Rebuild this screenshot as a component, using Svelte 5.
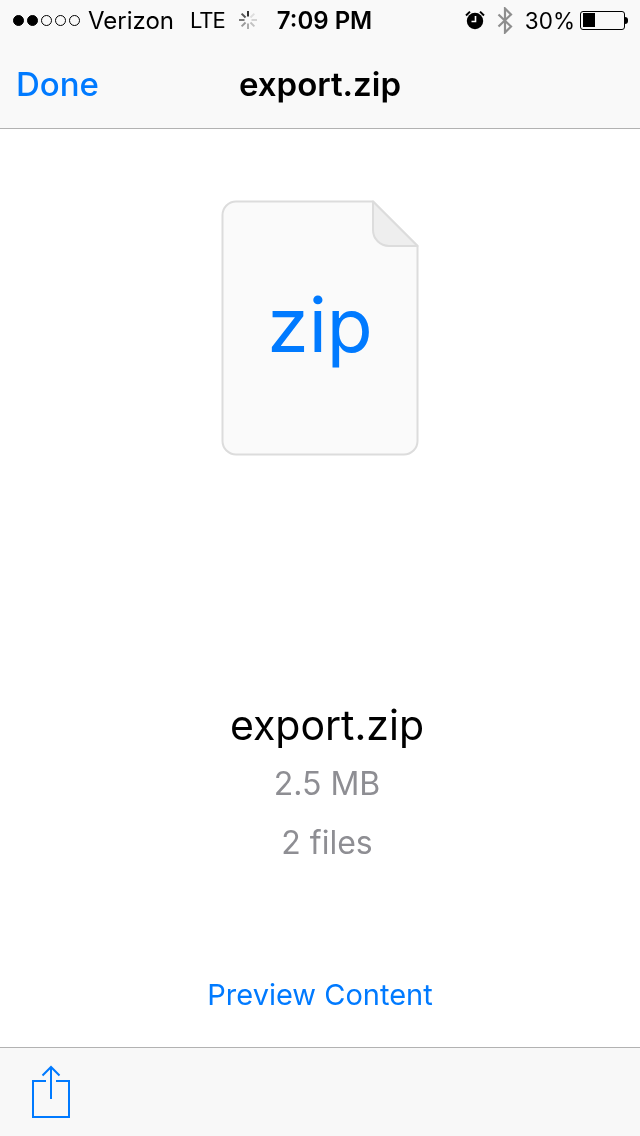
<script>
  const signal = [true, true, false, false, false];
  const spokes = [0, 45, 90, 135, 180, 225, 270, 315];
  const spokeOpacity = [0.8, 0.1, 0.15, 0.22, 0.3, 0.38, 0.5, 0.65];
</script>

<div class="screen">
  <header class="top">
    <div class="status">
      <div class="left">
        <div class="dots">
          {#each signal as on}
            <span class="dot" class:on></span>
          {/each}
        </div>
        <span class="carrier">Verizon</span>
        <span class="lte">LTE</span>
        <svg class="spinner" width="20" height="20" viewBox="0 0 20 20">
          {#each spokes as a, i}
            <line x1="10" y1="1" x2="10" y2="6.5" stroke="#000" stroke-width="2" opacity={spokeOpacity[i]} transform="rotate({a} 10 10)" />
          {/each}
        </svg>
      </div>
      <div class="time">7:09 PM</div>
      <div class="right">
        <svg class="alarm" width="20" height="20" viewBox="0 0 20 20">
          <circle cx="10" cy="11" r="8.2" fill="#000" />
          <path d="M1 5.5 L5 1.6 M15 1.6 L19 5.5" stroke="#000" stroke-width="2" fill="none" />
          <path d="M10.5 6 V11.5 H6.5" stroke="#fff" stroke-width="1.6" fill="none" />
        </svg>
        <svg class="bt" width="16" height="27" viewBox="0 0 16 27">
          <path d="M1.5 7.5 L14 19.5 L8 25.5 V1.5 L14 7.5 L1.5 19.5" stroke="#8e8e8e" stroke-width="2.2" fill="none" />
        </svg>
        <span class="pct">30%</span>
        <div class="battery">
          <div class="shell"><div class="level"></div></div>
          <div class="nub"></div>
        </div>
      </div>
    </div>
    <nav class="nav">
      <span class="done">Done</span>
      <span class="title">export.zip</span>
    </nav>
  </header>

  <main class="body">
    <div class="file">
      <svg width="198" height="256" viewBox="0 0 198 256">
        <path d="M152 1.5 H15 A13.5 13.5 0 0 0 1.5 15 V241 A13.5 13.5 0 0 0 15 254.5 H183 A13.5 13.5 0 0 0 196.5 241 V46 Z" fill="#fafafa" stroke="#dcdcdc" stroke-width="2" />
        <path d="M152 1.5 V30 A16 16 0 0 0 168 46 H196.5 Z" fill="#eeeeee" stroke="#dcdcdc" stroke-width="2" stroke-linejoin="round" />
      </svg>
      <span class="ext">zip</span>
    </div>
    <div class="name">export.zip</div>
    <div class="meta first">2.5 MB</div>
    <div class="meta">2 files</div>
    <div class="preview">Preview Content</div>
  </main>

  <footer class="toolbar">
    <svg width="40" height="54" viewBox="0 0 40 54">
      <path d="M15 16 H2 V52 H38 V16 H25" fill="none" stroke="#007aff" stroke-width="2" />
      <path d="M20 34 V3" fill="none" stroke="#007aff" stroke-width="2" />
      <path d="M11.5 10.5 L20 2 L28.5 10.5" fill="none" stroke="#007aff" stroke-width="2" />
    </svg>
  </footer>
</div>

<style>
  :global(body) {
    margin: 0;
    background: #fff;
  }

  .screen {
    width: 640px;
    height: 1136px;
    display: flex;
    flex-direction: column;
    font-family: Inter, "Liberation Sans", sans-serif;
    color: #000;
    overflow: hidden;
    will-change: transform;
  }

  .top {
    background: #f9f9f9;
    border-bottom: 1px solid #b2b2b2;
    height: 128px;
    flex: none;
  }

  .status {
    height: 40px;
    display: flex;
    align-items: center;
    font-size: 24px;
    padding: 0 12px 0 13px;
  }

  .left,
  .right {
    flex: 1;
    display: flex;
    align-items: center;
  }

  .right {
    justify-content: flex-end;
  }

  .dots {
    display: flex;
    gap: 3px;
  }

  .dot {
    width: 9px;
    height: 9px;
    border: 1px solid #000;
    border-radius: 50%;
  }

  .dot.on {
    background: #000;
  }

  .carrier {
    margin-left: 8px;
  }

  .lte {
    margin-left: 16px;
    font-size: 22px;
    letter-spacing: -1px;
  }

  .spinner {
    margin-left: 13px;
  }

  .time {
    font-weight: 600;
    margin-left: 8px;
  }

  .alarm {
    margin-right: 12px;
  }

  .bt {
    margin-right: 12px;
  }

  .pct {
    font-size: 22.5px;
  }

  .battery {
    display: flex;
    align-items: center;
    margin-left: 5px;
  }

  .shell {
    box-sizing: border-box;
    width: 45px;
    height: 19px;
    border: 1px solid #000;
    border-radius: 3px;
    padding: 1.5px;
  }

  .level {
    width: 12px;
    height: 100%;
    background: #000;
  }

  .nub {
    width: 3px;
    height: 7px;
    background: #000;
    border-radius: 0 3px 3px 0;
  }

  .nav {
    height: 88px;
    position: relative;
    display: flex;
    align-items: center;
    justify-content: center;
  }

  .done {
    position: absolute;
    left: 16px;
    color: #007aff;
    font-size: 33px;
    font-weight: 500;
  }

  .title {
    font-size: 33px;
    font-weight: 600;
  }

  .body {
    flex: 1;
    display: flex;
    flex-direction: column;
    align-items: center;
  }

  .file {
    margin-top: 71px;
    width: 198px;
    height: 256px;
    display: grid;
    place-items: center;
  }

  .file svg,
  .ext {
    grid-area: 1 / 1;
  }

  .ext {
    color: #007aff;
    font-size: 75px;
    font-weight: 400;
    line-height: 1;
    padding-bottom: 8px;
  }

  .name {
    margin-top: 244px;
    margin-left: 14px;
    font-size: 41px;
    line-height: 50px;
  }

  .meta {
    font-size: 32px;
    line-height: 40px;
    color: #8e8e93;
    margin-top: 19px;
    margin-left: 14px;
  }

  .meta.first {
    margin-top: 14px;
  }

  .preview {
    margin-top: 112px;
    font-size: 29px;
    line-height: 40px;
    color: #007aff;
  }

  .toolbar {
    height: 88px;
    flex: none;
    background: #f8f8f8;
    border-top: 1px solid #b2b2b2;
    display: flex;
    align-items: center;
    padding-left: 31px;
  }
</style>
